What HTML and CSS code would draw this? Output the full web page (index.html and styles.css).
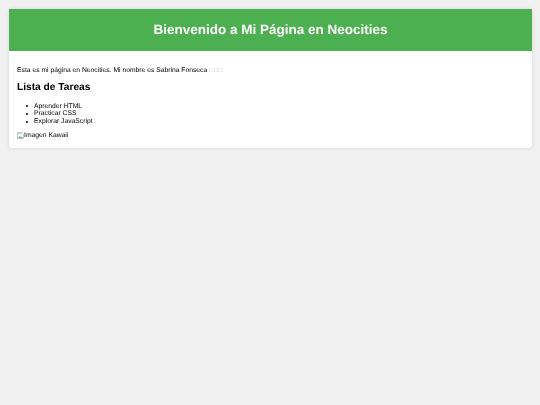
FILE: index.html
```html
<!DOCTYPE html>
<html lang="es">
<head>
  <meta charset="UTF-8">
  <meta name="viewport" content="width=device-width, initial-scale=1.0">
  <title>Mi Página en Neocities</title>
  <link rel="stylesheet" href="styles.css">
</head>
<body>
  <div class="container">
    <header class="page-header">
      <h1>Bienvenido a Mi Página en Neocities</h1>
    </header>
    <main class="content">
      <p class="intro">Esta es mi página en Neocities. Mi nombre es Sabrina Fonseca <span class="missing-glyphs">□□□</span></p>
      <h2>Lista de Tareas</h2>
      <ul class="task-list">
        <li>Aprender HTML</li>
        <li>Practicar CSS</li>
        <li>Explorar JavaScript</li>
      </ul>
      <div class="broken-image">
        <svg class="broken-icon" viewBox="0 0 16 16" width="7" height="7" aria-hidden="true">
          <path d="M1 1h10l4 4v10H1z" fill="#fff" stroke="#a0a0a0" stroke-width="1.4"/>
          <path d="M2 14l4-5 3 3 2-2 3 4z" fill="#7fb27a"/>
          <path d="M2 2h8v4H2z" fill="#c4d4f0"/>
        </svg>
        <span>Imagen Kawaii</span>
      </div>
    </main>
  </div>
</body>
</html>
```

FILE: styles.css
```css
body {
  font-family: "Liberation Sans", Arial, sans-serif;
  font-size: 6.75px;
  margin: 0;
  padding: 8.5px;
  background-color: #f0f0f0;
  color: #000;
  text-rendering: geometricPrecision;
}

.container {
  background: white;
  border-radius: 4px;
  box-shadow: 0 0 4px rgba(0, 0, 0, 0.1);
  will-change: transform;
}

.page-header {
  background: #4caf50;
  color: white;
  text-align: center;
  padding: 12px 8px 13px;
}

.page-header h1 {
  margin: 0;
  font-size: 13.5px;
  line-height: 17px;
  font-weight: bold;
}

.content {
  padding: 16px 8px 8px;
}

.intro {
  margin: 0;
  line-height: 8px;
}

.missing-glyphs {
  color: #c8c8c8;
  letter-spacing: 0.8px;
}

h2 {
  margin: 7px 0 8.5px;
  font-size: 10.2px;
  line-height: 12px;
}

.task-list {
  margin: 0 0 5.5px;
  padding: 0;
  list-style: none;
  line-height: 7.9px;
}

.task-list li {
  display: flex;
  align-items: center;
}

.task-list li::before {
  content: "";
  width: 2px;
  height: 2px;
  margin: 0 6px 0 9px;
  border-radius: 50%;
  background: #000;
}

.broken-image {
  display: flex;
  align-items: center;
  line-height: 8px;
}

.broken-icon {
  flex: none;
}
```
